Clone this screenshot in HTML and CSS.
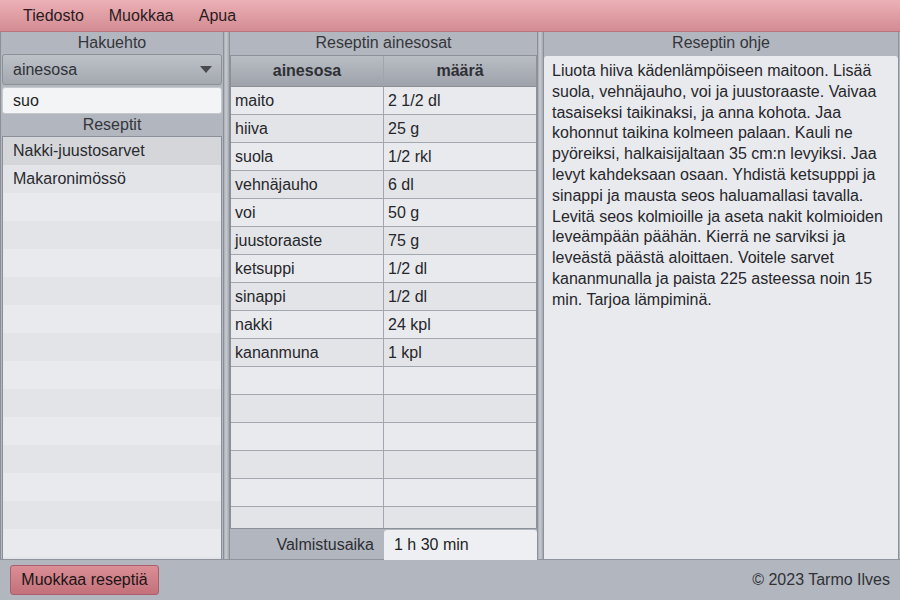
FILE: index.html
```html
<!DOCTYPE html>
<html lang="fi">
<head>
<meta charset="utf-8">
<title>Reseptit</title>
<link rel="stylesheet" href="styles.css">
</head>
<body>
<div class="app">
  <nav class="menubar">
    <span class="menu-item">Tiedosto</span>
    <span class="menu-item">Muokkaa</span>
    <span class="menu-item">Apua</span>
  </nav>
  <main class="main">
    <section class="panel panel-left">
      <div class="panel-title">Hakuehto</div>
      <div class="combo">
        <span>ainesosa</span>
        <svg class="combo-arrow" width="12" height="7" viewBox="0 0 12 7"><path d="M0 0h12L6 7z" fill="#4a4a4e"/></svg>
      </div>
      <div class="textfield">suo</div>
      <div class="panel-title">Reseptit</div>
      <ul class="list">
        <li class="selected">Nakki-juustosarvet</li>
        <li>Makaronimössö</li>
        <li></li><li></li><li></li><li></li><li></li><li></li><li></li><li></li><li></li><li></li><li></li><li></li><li></li><li></li>
      </ul>
    </section>
    <div class="splitter"></div>
    <section class="panel panel-middle">
      <div class="panel-title">Reseptin ainesosat</div>
      <div class="table">
        <div class="thead">
          <div class="th">ainesosa</div>
          <div class="th">määrä</div>
        </div>
        <div class="tbody">
          <div class="tr"><div class="td">maito</div><div class="td">2 1/2 dl</div></div>
          <div class="tr"><div class="td">hiiva</div><div class="td">25 g</div></div>
          <div class="tr"><div class="td">suola</div><div class="td">1/2 rkl</div></div>
          <div class="tr"><div class="td">vehnäjauho</div><div class="td">6 dl</div></div>
          <div class="tr"><div class="td">voi</div><div class="td">50 g</div></div>
          <div class="tr"><div class="td">juustoraaste</div><div class="td">75 g</div></div>
          <div class="tr"><div class="td">ketsuppi</div><div class="td">1/2 dl</div></div>
          <div class="tr"><div class="td">sinappi</div><div class="td">1/2 dl</div></div>
          <div class="tr"><div class="td">nakki</div><div class="td">24 kpl</div></div>
          <div class="tr"><div class="td">kananmuna</div><div class="td">1 kpl</div></div>
          <div class="tr"><div class="td"></div><div class="td"></div></div>
          <div class="tr"><div class="td"></div><div class="td"></div></div>
          <div class="tr"><div class="td"></div><div class="td"></div></div>
          <div class="tr"><div class="td"></div><div class="td"></div></div>
          <div class="tr"><div class="td"></div><div class="td"></div></div>
          <div class="tr"><div class="td"></div><div class="td"></div></div>
        </div>
      </div>
      <div class="time-row">
        <div class="time-label">Valmistusaika</div>
        <div class="time-field">1 h 30 min</div>
      </div>
    </section>
    <div class="splitter"></div>
    <section class="panel panel-right">
      <div class="panel-title">Reseptin ohje</div>
      <div class="instructions">Liuota hiiva kädenlämpöiseen maitoon. Lisää suola, vehnäjauho, voi ja juustoraaste. Vaivaa tasaiseksi taikinaksi, ja anna kohota. Jaa kohonnut taikina kolmeen palaan. Kauli ne pyöreiksi, halkaisijaltaan 35 cm:n levyiksi. Jaa levyt kahdeksaan osaan. Yhdistä ketsupppi ja sinappi ja mausta seos haluamallasi tavalla. Levitä seos kolmioille ja aseta nakit kolmioiden leveämpään päähän. Kierrä ne sarviksi ja leveästä päästä aloittaen. Voitele sarvet kananmunalla ja paista 225 asteessa noin 15 min. Tarjoa lämpiminä.</div>
    </section>
  </main>
  <footer class="bottombar">
    <button class="btn">Muokkaa reseptiä</button>
    <span class="copyright">© 2023 Tarmo Ilves</span>
  </footer>
</div>
</body>
</html>
```
FILE: styles.css
```css
* { box-sizing: border-box; }
html, body { margin: 0; padding: 0; }
body {
  width: 900px;
  height: 600px;
  overflow: hidden;
  font-family: "Liberation Sans", Arial, sans-serif;
  font-size: 16px;
  color: #2c2c30;
  background: #b2b6bf;
}
.app { display: flex; flex-direction: column; height: 600px; }

.menubar {
  height: 32px;
  flex: none;
  display: flex;
  align-items: center;
  padding-left: 23px;
  gap: 25px;
  background: linear-gradient(#ebb0b5, #d48c94);
  border-bottom: 1px solid #b9747c;
}
.menu-item { color: #2a1b1d; line-height: 20px; }

.main {
  flex: none;
  height: 528px;
  display: flex;
  background: #b2b6bf;
  border-bottom: 1px solid #8f939b;
}
.panel {
  display: flex;
  flex-direction: column;
  border-left: 1px solid #8c9098;
  border-right: 1px solid #8c9098;
}
.panel-left { width: 224px; padding: 0 1px 0 1px; }
.panel-middle { width: 309px; }
.panel-right { width: 356px; }
.splitter {
  width: 5px;
  flex: none;
  background: linear-gradient(90deg, #a7abb3, #c9ccd2 40%, #a3a7af);
}

.panel-title {
  height: 22px;
  line-height: 22px;
  text-align: center;
  color: #34363b;
  flex: none;
}

.combo {
  height: 31px;
  margin: 0 0 2px 0;
  border: 1px solid #8d9198;
  border-radius: 3px;
  background: linear-gradient(#bdc1c8, #a4a8b0);
  display: flex;
  align-items: center;
  justify-content: space-between;
  padding: 0 9px 0 10px;
  color: #303237;
}
.textfield {
  height: 27px;
  background: #f3f4f6;
  border-radius: 3px;
  padding-left: 10px;
  line-height: 25px;
  color: #1e1f22;
  border: 1px solid #c6c9ce;
}
.panel-left .panel-title + .list { margin-top: 0; }
.list {
  list-style: none;
  margin: 0;
  padding: 0;
  flex: 1;
  overflow: hidden;
  border: 1px solid #8c9098;
  border-bottom: none;
}
.list li {
  height: 28px;
  line-height: 28px;
  padding-left: 10px;
  background: #e9eaee;
  color: #2a2b30;
}
.list li:nth-child(even) { background: #e3e4e8; }
.list li.selected { background: #d5d6d9; }

.table {
  flex: 1;
  display: flex;
  flex-direction: column;
  overflow: hidden;
  border: 1px solid #8c9098;
  margin-top: 1px;
}
.thead {
  height: 31px;
  flex: none;
  display: grid;
  grid-template-columns: 153px 1fr;
  background: linear-gradient(#b9bdc4, #9ea2aa);
  border-bottom: 1px solid #8c9098;
}
.th {
  font-weight: bold;
  text-align: center;
  line-height: 30px;
  color: #2f3035;
  border-right: 1px solid #a0a4ac;
}
.th:last-child { border-right: none; }
.tbody { flex: 1; overflow: hidden; background: #e9eaee; }
.tr {
  display: grid;
  grid-template-columns: 153px 1fr;
  height: 28px;
  border-bottom: 1px solid #a3a7b0;
  background: #e9eaee;
}
.tr:nth-child(even) { background: #e3e4e8; }
.td {
  padding-left: 4px;
  line-height: 27px;
  border-right: 1px solid #a3a7b0;
  color: #26272b;
}
.td:last-child { border-right: none; }

.time-row {
  height: 30px;
  flex: none;
  display: grid;
  grid-template-columns: 154px 1fr;
  align-items: stretch;
}
.time-label {
  text-align: right;
  padding-right: 10px;
  line-height: 32px;
  color: #2d2e33;
}
.time-field {
  background: #eeeff2;
  border-radius: 3px 3px 0 0;
  padding-left: 10px;
  line-height: 30px;
  color: #1e1f24;
  margin-top: 1px;
}

.instructions {
  flex: 1;
  margin-top: 2px;
  background: #e9eaee;
  border-radius: 3px 3px 0 0;
  padding: 5px 10px 0 8px;
  line-height: 20.8px;
  color: #26272b;
}

.bottombar {
  flex: 1;
  display: flex;
  align-items: center;
  justify-content: space-between;
  padding: 0 10px 0 10px;
  background: #b2b6bf;
}
.btn {
  height: 30px;
  width: 149px;
  font-family: inherit;
  font-size: 16px;
  color: #1d1416;
  border: 1px solid #ad5f68;
  border-radius: 3px;
  background: linear-gradient(#da8e95, #c3717a);
  padding: 0;
}
.copyright { color: #303237; }
```
